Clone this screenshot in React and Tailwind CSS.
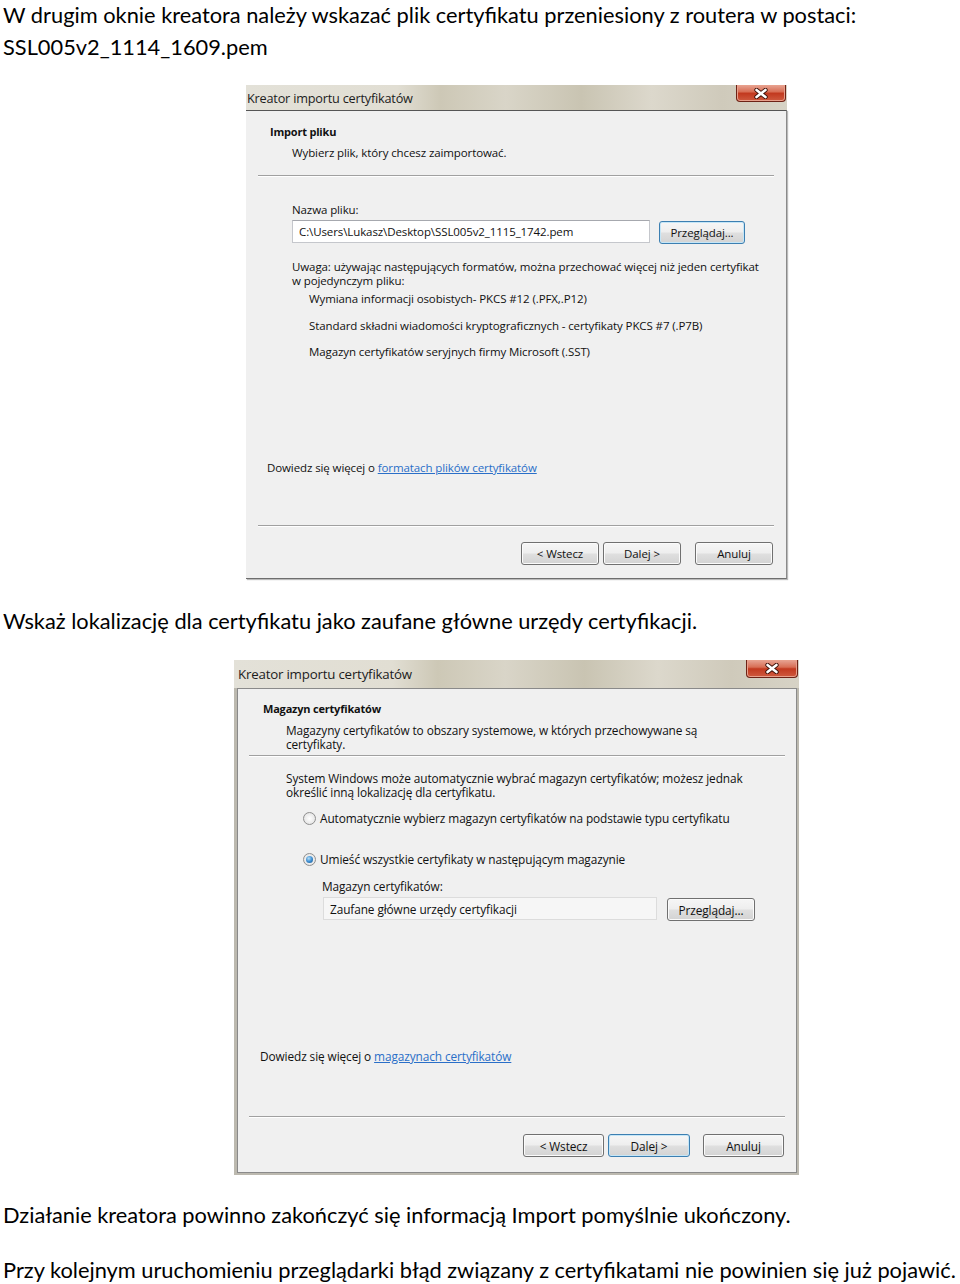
import clsx from "clsx";

const DIALOG_FONT = "font-[Open_Sans,sans-serif] leading-[14px] text-[#111]";

function WinButton({ children, className, focused }) {
  return (
    <div
      className={clsx(
        "flex items-center justify-center h-[23px] rounded-[3px] border bg-[linear-gradient(#f6f6f6_0%,#eeeeee_48%,#dfdfdf_52%,#d3d3d3_100%)]",
        focused ? "border-[#3c7fb1] shadow-[inset_0_0_0_1px_#c5e6f7]" : "border-[#707070] shadow-[inset_0_0_0_1px_#fbfbfb]",
        className
      )}
    >
      {children}
    </div>
  );
}

function Separator({ className }) {
  return <div className={clsx("h-[2px] border-t border-t-[#a0a0a0] border-b border-b-white", className)} />;
}

function Radio({ checked }) {
  return (
    <span className="shrink-0 w-[13px] h-[13px] rounded-full border border-[#8f8f8f] bg-[radial-gradient(circle,#ffffff_0%,#e9e9e9_65%,#cfcfcf_100%)] flex items-center justify-center">
      {checked && (
        <span className="w-[7px] h-[7px] rounded-full bg-[radial-gradient(circle_at_40%_35%,#b7e0f8_0%,#3f8fd2_50%,#124f8a_100%)]" />
      )}
    </span>
  );
}

function CloseButton({ className }) {
  return (
    <div
      className={clsx(
        "absolute top-0 flex items-center justify-center rounded-b-[4px] border border-t-0 border-[#6d2216] bg-[linear-gradient(#e7a594_0%,#d86e55_42%,#c2391f_52%,#cf5a3f_100%)] shadow-[inset_0_0_0_1px_#e8a08c]",
        className
      )}
    >
      {/* krzyżyk zamykania */}
      <svg width="14" height="11" viewBox="0 0 14 11">
        <path d="M2.5 2 L11.5 9 M11.5 2 L2.5 9" stroke="#3b1008" strokeWidth="4.4" strokeLinecap="round" />
        <path d="M2.5 2 L11.5 9 M11.5 2 L2.5 9" stroke="#ffffff" strokeWidth="2.6" strokeLinecap="round" />
      </svg>
    </div>
  );
}

function TitleBar({ height, className }) {
  return (
    <div
      className={clsx(
        "relative flex items-center bg-[linear-gradient(90deg,#e3e1d8_0%,#e1ded3_28%,#cdc8b6_36%,#d9d5c8_48%,#c9c4b2_62%,#dcd8cc_75%,#cfcabb_88%,#d7d3c6_100%)]",
        height
      )}
    >
      <span className={clsx("font-[Open_Sans,sans-serif] tracking-[-0.2px] text-[#1c1c1c]", className)}>
        Kreator importu certyfikatów
      </span>
    </div>
  );
}

function Heading({ children, className }) {
  return <p className={clsx("font-bold text-[11px] tracking-[-0.2px]", className)}>{children}</p>;
}

function FirstDialog() {
  return (
    <div className={clsx("ml-[246px] w-[541px] text-[11.5px] tracking-[-0.1px]", DIALOG_FONT)}>
      <div className="relative">
        <TitleBar height="h-[25px]" className="pl-[1px] text-[12.7px]" />
        <CloseButton className="right-[1px] w-[50px] h-[17px]" />
      </div>
      <div className="h-[469px] bg-[#f0f0f0] border-t border-t-[#555] border-r border-r-[#8a8a8a] border-b border-b-[#6e6e6e] shadow-[1px_1px_1px_#bbb]">
        <Heading className="mt-[14px] pl-[24px]">Import pliku</Heading>
        <p className="mt-[7px] pl-[46px]">Wybierz plik, który chcesz zaimportować.</p>
        <Separator className="mt-[15px] mx-[12px]" />
        <p className="mt-[26px] pl-[46px]">Nazwa pliku:</p>
        <div className="mt-[3px] pl-[46px] flex items-start gap-[9px]">
          <div className="w-[358px] h-[23px] bg-white border border-[#c5c7cc] border-t-[#a6a8ae] flex items-center px-[6px]">
            C:\Users\Lukasz\Desktop\SSL005v2_1115_1742.pem
          </div>
          <WinButton focused className="mt-px w-[86px]">Przeglądaj...</WinButton>
        </div>
        <p className="mt-[16px] pl-[46px]">
          Uwaga: używając następujących formatów, można przechować więcej niż jeden certyfikat
          <br />w pojedynczym pliku:
        </p>
        <p className="mt-[4px] pl-[63px]">Wymiana informacji osobistych- PKCS #12 (.PFX,.P12)</p>
        <p className="mt-[13px] pl-[63px]">Standard składni wiadomości kryptograficznych - certyfikaty PKCS #7 (.P7B)</p>
        <p className="mt-[12px] pl-[63px]">Magazyn certyfikatów seryjnych firmy Microsoft (.SST)</p>
        <p className="mt-[102px] pl-[21px]">
          Dowiedz się więcej o <span className="text-[#2a6fc8] underline">formatach plików certyfikatów</span>
        </p>
        <Separator className="mt-[50px] mx-[12px]" />
        <div className="mt-[15px] mr-[13px] flex justify-end">
          <WinButton className="w-[78px]">&lt; Wstecz</WinButton>
          <WinButton className="ml-[4px] w-[78px]">Dalej &gt;</WinButton>
          <WinButton className="ml-[14px] w-[78px]">Anuluj</WinButton>
        </div>
      </div>
    </div>
  );
}

function SecondDialog() {
  return (
    <div
      className={clsx(
        "ml-[234px] w-[565px] h-[515px] flex flex-col bg-[#bcb9af] pl-[3px] pr-[2px] pb-[2px] text-[11.85px] tracking-[-0.1px]",
        DIALOG_FONT
      )}
    >
      <div className="relative -ml-[3px] -mr-[2px]">
        <TitleBar height="h-[28px]" className="pl-[4px] text-[13.3px]" />
        <CloseButton className="right-[1px] w-[52px] h-[18px]" />
      </div>
      <div className="flex-1 bg-[#f0f0f0] border border-[#8a8a8a]">
        <Heading className="mt-[13px] pl-[25px]">Magazyn certyfikatów</Heading>
        <p className="mt-[7px] pl-[48px]">
          Magazyny certyfikatów to obszary systemowe, w których przechowywane są
          <br />certyfikaty.
        </p>
        <Separator className="mt-[4px] mx-[11px]" />
        <p className="mt-[14px] pl-[48px]">
          System Windows może automatycznie wybrać magazyn certyfikatów; możesz jednak
          <br />określić inną lokalizację dla certyfikatu.
        </p>
        <div className="mt-[12px] pl-[65px] flex items-center gap-[4px] h-[14px]">
          <Radio />
          <span className="whitespace-nowrap">Automatycznie wybierz magazyn certyfikatów na podstawie typu certyfikatu</span>
        </div>
        <div className="mt-[27px] pl-[65px] flex items-center gap-[4px] h-[14px]">
          <Radio checked />
          <span>Umieść wszystkie certyfikaty w następującym magazynie</span>
        </div>
        <p className="mt-[13px] pl-[84px]">Magazyn certyfikatów:</p>
        <div className="mt-[4px] pl-[85px] flex items-start gap-[10px]">
          <div className="w-[334px] h-[23px] bg-[#f6f6f6] border border-[#dcdcdc] flex items-center px-[6px]">
            Zaufane główne urzędy certyfikacji
          </div>
          <WinButton className="mt-px w-[88px]">Przeglądaj...</WinButton>
        </div>
        <p className="mt-[128px] pl-[22px]">
          Dowiedz się więcej o <span className="text-[#2a6fc8] underline">magazynach certyfikatów</span>
        </p>
        <Separator className="mt-[53px] mx-[11px]" />
        <div className="mt-[16px] mr-[12px] flex justify-end">
          <WinButton className="w-[81px]">&lt; Wstecz</WinButton>
          <WinButton focused className="ml-[4px] w-[82px]">Dalej &gt;</WinButton>
          <WinButton className="ml-[13px] w-[81px]">Anuluj</WinButton>
        </div>
      </div>
    </div>
  );
}

export default function App() {
  return (
    <div className="w-[960px] h-[1284px] overflow-hidden bg-white text-black font-[Lato,sans-serif] text-[21.8px] leading-[32px]">
      <p className="-mt-[1px] pl-[3px]">
        W drugim oknie kreatora należy wskazać plik certyfikatu przeniesiony z routera w postaci:
        <br />
        SSL005v2_1114_1609.pem
      </p>
      <div className="mt-[22px]">
        <FirstDialog />
      </div>
      <p className="mt-[26px] pl-[3px]">
        Wskaż lokalizację dla certyfikatu jako zaufane główne urzędy certyfikacji.
      </p>
      <div className="mt-[23px]">
        <SecondDialog />
      </div>
      <p className="mt-[24px] pl-[3px]">
        Działanie kreatora powinno zakończyć się informacją Import pomyślnie ukończony.
      </p>
      <p className="mt-[23px] pl-[3px] whitespace-nowrap">
        Przy kolejnym uruchomieniu przeglądarki błąd związany z certyfikatami nie powinien się już pojawić.
      </p>
    </div>
  );
}
